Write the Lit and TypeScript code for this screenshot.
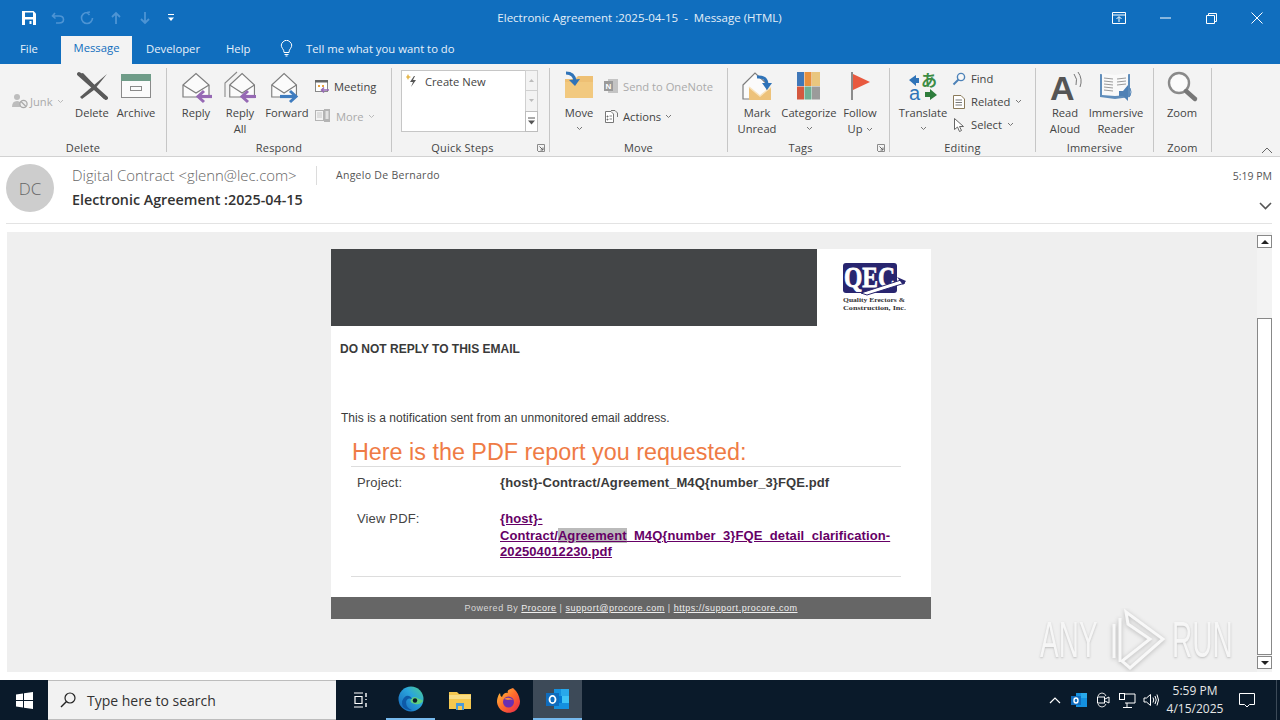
import { LitElement, html, svg, css } from "lit";
import { customElement } from "lit/decorators.js";

const chev = html`<svg class="chev" width="7" height="5" viewBox="0 0 7 5"><path d="M1 1l2.5 2.5L6 1" fill="none" stroke="currentColor" stroke-width="1"/></svg>`;

const envelope = svg`<path d="M5 15L18 3.5L31 15V27H5Z" fill="#fbfbfb" stroke="#7d7d7d" stroke-width="1.2"/><path d="M5 15L18 23L31 15" fill="none" stroke="#7d7d7d" stroke-width="1.2"/>`;
const purpleArrow = svg`<path d="M34 26.5H22" stroke="#9669b4" stroke-width="3.2" fill="none"/><path d="M26 21L20 26.5L26 32" stroke="#9669b4" stroke-width="3" fill="none"/>`;

const icons: Record<string, unknown> = {
  del: html`<svg width="32" height="35" viewBox="0 0 32 35"><path d="M3 4L7 3L31 28L28 29Z" fill="#5a5a5a"/><path d="M31 4L4 27L6 29L18 20Z" fill="#5a5a5a"/><path d="M3 4L30 28" stroke="#5a5a5a" stroke-width="4" stroke-linecap="round"/></svg>`,
  archive: html`<svg width="32" height="35" viewBox="0 0 32 35"><rect x="1.5" y="4.5" width="29" height="23" fill="#fbfbfb" stroke="#8a8a8a"/><rect x="1" y="4" width="30" height="7" fill="#6f9c88"/><rect x="10.5" y="16.5" width="11" height="4" fill="none" stroke="#8a8a8a"/></svg>`,
  reply: html`<svg width="36" height="35" viewBox="0 0 36 35">${envelope}${purpleArrow}</svg>`,
  replyall: html`<svg width="36" height="35" viewBox="0 0 36 35"><path d="M3 27V13L15 2" fill="none" stroke="#8a8a8a" stroke-width="1.1"/><g transform="translate(3,0) scale(.95,1)">${envelope}</g>${purpleArrow}</svg>`,
  forward: html`<svg width="36" height="35" viewBox="0 0 36 35"><g transform="translate(-2,0) scale(.95,1)">${envelope}</g><path d="M11 26.5H26" stroke="#3f7cbf" stroke-width="3.2" fill="none"/><path d="M21 21L27 26.5L21 32" stroke="#3f7cbf" stroke-width="3" fill="none"/></svg>`,
  move: html`<svg width="34" height="35" viewBox="0 0 34 35"><path d="M3 9H13L16 6H31V28H3Z" fill="#eec074"/><path d="M3 12H31V28H3Z" fill="#f2c97f"/><path d="M4 3Q12 3 13 11" fill="none" stroke="#2f73b8" stroke-width="3"/><path d="M7 10L13 16L18 9Z" fill="#2f73b8"/></svg>`,
  unread: html`<svg width="34" height="35" viewBox="0 0 34 35"><path d="M3 15L15 3L27 14V29H3Z" fill="#fbfbfb" stroke="#7d7d7d" stroke-width="1.2"/><path d="M9 17L20 26L31 17V30H9Z" fill="#edc27a"/><path d="M9 17L20 26L31 17" fill="none" stroke="#f8e3bd" stroke-width="1.5"/><path d="M17 7Q27 6 27 15" fill="none" stroke="#2f73b8" stroke-width="3"/><path d="M22 13L27 20L32 13Z" fill="#2f73b8"/></svg>`,
  cat: html`<svg width="30" height="35" viewBox="0 0 30 35"><rect x="3" y="2" width="7" height="14" fill="#3f77b8"/><rect x="10.5" y="2" width="7" height="14" fill="#e8903c"/><rect x="18" y="2" width="8" height="14" fill="#e9c67f"/><rect x="3" y="16.5" width="7" height="13" fill="#d4583f"/><rect x="10.5" y="16.5" width="7" height="13" fill="#6fae94"/><rect x="18" y="16.5" width="8" height="13" fill="#9b9b9b"/></svg>`,
  flag: html`<svg width="30" height="35" viewBox="0 0 30 35"><rect x="6" y="2" width="2" height="28" fill="#8b8b8b"/><path d="M8 4L25 12L8 20Z" fill="#e8593f"/></svg>`,
  translate: html`<svg class="vis" width="34" height="35" viewBox="0 0 34 35"><path d="M3 10L10 5V8H13V13H10V16Z" fill="#2f73b8"/><text x="15" y="16" class="glyph-g">あ</text><text x="3" y="30" class="glyph-b">a</text><path d="M31 25L24 30V27H19V22H24V19Z" fill="#2e7d3c"/></svg>`,
  read: html`<svg class="vis" width="40" height="35" viewBox="0 0 40 35"><text x="5" y="30" class="bigA">A</text><path d="M29 4Q33 9 31 15M33 2Q38 9 35 17" fill="none" stroke="#777" stroke-width="1"/></svg>`,
  reader: html`<svg width="38" height="35" viewBox="0 0 38 35"><path d="M3 4L18 6L33 4V27L18 29L3 27Z" fill="#5f8dbb"/><path d="M5 3L18 5V26L5 25Z" fill="#f9f9f9"/><path d="M18 5L31 3V25L18 26Z" fill="#f9f9f9"/><path d="M7 8l9 1M7 11l9 1M7 14l9 1M7 17l9 1M7 20l9 1M20 9l9-1M20 12l9-1M20 15l9-1" stroke="#9a9a9a"/><path d="M22 21H26L31 15V31L26 26H22Z" fill="#4f81b5"/><path d="M33 18Q35 22 33 26" stroke="#4f81b5" fill="none"/></svg>`,
  zoom: html`<svg width="34" height="35" viewBox="0 0 34 35"><circle cx="14" cy="13" r="10" fill="#fbfbfb" stroke="#8a8a8a" stroke-width="2.4"/><path d="M21 21L30 29" stroke="#777" stroke-width="4.4" stroke-linecap="round"/></svg>`,
};

const small: Record<string, unknown> = {
  meeting: html`<svg width="16" height="16" viewBox="0 0 16 16"><rect x="1.5" y="2.5" width="12" height="11" fill="#fff" stroke="#888"/><rect x="1" y="2" width="13" height="2.5" fill="#666"/><path d="M4 7h2v2H4zM8 7h2v2H8z" fill="#e8a23c"/><path d="M15 12H8M10 9.5L7.5 12L10 14.5" stroke="#9669b4" stroke-width="1.5" fill="none"/></svg>`,
  more: html`<svg width="18" height="16" viewBox="0 0 18 16"><rect x="1.5" y="2.5" width="8" height="10" fill="none" stroke="#b4b4b4"/><path d="M3 5h5M3 7h5M3 9h5" stroke="#c8c8c8"/><rect x="10" y="1" width="6" height="13" fill="#b4b4b4"/><rect x="11.5" y="3" width="3" height="8" fill="#e2e2e2"/></svg>`,
  junk: html`<svg width="18" height="18" viewBox="0 0 18 18"><circle cx="6" cy="5" r="3" fill="#bdbdbd"/><path d="M1 15Q1 9 6 9Q9 9 10 12V15Z" fill="#bdbdbd"/><circle cx="12.5" cy="12" r="3.6" fill="#eee" stroke="#a8a8a8" stroke-width="1.2"/><path d="M10 9.5L15 14.5" stroke="#a8a8a8" stroke-width="1.1"/></svg>`,
  onenote: html`<svg width="16" height="16" viewBox="0 0 16 16"><rect x="5" y="1" width="10" height="14" fill="#c4c4c4"/><rect x="1" y="3" width="9" height="10" fill="#9a9a9a"/><text x="2.6" y="11" class="n">N</text></svg>`,
  actions: html`<svg width="16" height="16" viewBox="0 0 16 16"><path d="M2.5 3.5H8L10.5 6V14.5H2.5Z" fill="#fff" stroke="#777"/><path d="M4 8h1v1H4zM4 11h1v1H4zM6.5 8H9M6.5 11H9" stroke="#777" stroke-width=".9"/><path d="M8 2.5H12L14.5 5V9" fill="none" stroke="#777"/></svg>`,
  find: html`<svg width="14" height="14" viewBox="0 0 14 14"><circle cx="9" cy="5" r="3.6" fill="#f8f8f8" stroke="#4d82b8" stroke-width="1.4"/><path d="M6.5 7.5L1.5 12.5" stroke="#4d82b8" stroke-width="2"/></svg>`,
  related: html`<svg width="14" height="16" viewBox="0 0 14 16"><path d="M1.5 1.5H9L12.5 5V14.5H1.5Z" fill="#fff" stroke="#8a7a5a"/><path d="M3.5 6H10M3.5 8.5H10M3.5 11H10" stroke="#777"/></svg>`,
  select: html`<svg width="14" height="16" viewBox="0 0 14 16"><path d="M2.5 1.5V12.5L5.5 10L7.5 14.5L9.5 13.5L7.5 9.5H11.5Z" fill="#fff" stroke="#666"/></svg>`,
};

function big(icon: string, lines: string[], width: number, chevron = false) {
  return html`<div class="big" style="width:${width}px">
    <div class="ic">${icons[icon]}</div>
    ${lines.map((l, i) => html`<span class="ln">${l}${chevron && i === lines.length - 1 && lines.length === 2 ? html` ${chev}` : ""}</span>`)}
    ${chevron && lines.length === 1 ? html`<span class="ln cl">${chev}</span>` : ""}
  </div>`;
}

function row(icon: string, text: string, opts: { dis?: boolean; chevron?: boolean } = {}) {
  return html`<div class="row ${opts.dis ? "dis" : ""}">${small[icon]}<span>${text}</span>${opts.chevron ? chev : ""}</div>`;
}

const launcher = html`<svg class="launch" width="8" height="8" viewBox="0 0 8 8"><path d="M.5 7V.5H7.5V7.5H1" fill="none" stroke="#8a8a8a"/><path d="M2.5 2.5L6 6M6 3.5V6H3.5" fill="none" stroke="#666"/></svg>`;

@customElement("app-root")
export class AppRoot extends LitElement {
  static styles = css`
    :host { display: block; width: 1280px; height: 720px; overflow: hidden; position: relative; background: #fff;
      font-family: "Open Sans", "Noto Sans", sans-serif; font-size: 11.2px; color: #444; }
    svg { display: block; flex: none; }
    svg.vis { overflow: visible; }
    .titlebar { height: 36px; background: #106ebe; display: flex; align-items: center; position: relative; color: #e4eef8; }
    .qat { display: flex; align-items: center; padding-left: 22px; gap: 15px; }
    .title { position: absolute; left: 0; right: 1px; text-align: center; top: 10px; font-size: 11.5px; line-height: 16px; white-space: pre; pointer-events: none; }
    .win { margin-left: auto; display: flex; }
    .win div { width: 46px; height: 30px; display: flex; align-items: center; justify-content: center; }
    .tabs { height: 28px; background: #106ebe; display: flex; align-items: flex-end; color: #e8f1fa; font-size: 11.3px; }
    .tab { height: 28px; box-sizing: border-box; padding-bottom: 4px; display: flex; align-items: center; }
    .tab.file { margin-left: 20px; width: 41px; }
    .tab.msg { width: 71px; justify-content: center; background: #f3f3f3; color: #106ebe; height: 30px; margin-top: -2px; }
    .tab.dev { margin-left: 14px; width: 80px; }
    .tab.help { width: 54px; }
    .tab.tell { display: flex; gap: 13px; }
    .ribbon { height: 92px; background: #f3f3f3; border-bottom: 1px solid #d2d2d2; display: flex; box-sizing: content-box; position: relative; }
    .group { display: flex; flex-direction: column; flex: none; height: 92px; }
    .g1 { width: 166px; } .g2 { width: 224px; } .g3 { width: 157px; } .g4 { width: 177px; }
    .g5 { width: 161px; } .g6 { width: 145px; } .g7 { width: 117px; } .g8 { width: 57px; }
    .main { flex: 1; display: flex; min-height: 0; }
    .g1 .main { padding-left: 11px; } .g2 .main { padding-left: 7px; } .g3 .main { padding-left: 9px; }
    .g4 .main { padding-left: 10px; } .g5 .main { padding-left: 7px; } .g6 .main { padding-left: 8px; }
    .g7 .main { padding-left: 6px; } .g8 .main { padding-left: 6px; }
    .glabel { height: 16px; line-height: 16px; text-align: center; position: relative; font-size: 11px; color: #444; letter-spacing: .2px; }
    .glabel.hasl { padding-right: 16px; }
    .launch { position: absolute; right: 4px; top: 4px; }
    .sep { width: 1px; margin: 4px 0; background: #c6c6c6; flex: none; }
    .big { display: flex; flex-direction: column; align-items: center; padding-top: 6px; flex: none; }
    .ic { height: 35px; display: flex; justify-content: center; }
    .ln { line-height: 16px; white-space: nowrap; display: flex; align-items: center; gap: 3px; height: 16px; }
    .cl { height: 14px; color: #666; }
    .chev { color: #777; }
    .col { display: flex; flex-direction: column; flex: none; }
    .col.two { padding-top: 11px; gap: 8px; margin-left: 2px; }
    .col.three { padding-top: 3px; margin-left: 4px; }
    .g4 .col.two { margin-left: 5px; }
    .row { height: 22px; display: flex; align-items: center; gap: 4px; white-space: nowrap; }
    .col.three .row { height: 23px; gap: 5px; }
    .dis { color: #aaa; }
    .dis .chev { color: #bbb; }
    .junk { margin-top: 28px; width: 59px; height: 18px; display: flex; align-items: center; gap: 1px; color: #aaa; flex: none; }
    .junk .chev { margin-left: 3px; color: #bbb; }
    .qs { margin-top: 6px; width: 137px; height: 62px; display: flex; }
    .qsbox { width: 124px; box-sizing: border-box; background: #fff; border: 1px solid #c6c6c6; border-right: 0; display: flex; align-items: flex-start; padding: 2px 0 0 3px; gap: 4px; }
    .qsbox span { line-height: 18px; margin-top: 0; }
    .qsbar { width: 13px; display: flex; flex-direction: column; }
    .qsbar div { flex: 1; border: 1px solid #d0d0d0; margin-bottom: -1px; background: #f3f3f3; display: flex; align-items: center; justify-content: center; }
    .qsbar div:last-child { background: #fff; border-color: #bdbdbd; margin-bottom: 0; }
    .collapse { flex: 1; display: flex; align-items: flex-end; justify-content: flex-end; padding: 0 7px 2px 0; }
    .glyph-g { font: bold 16px "Noto Sans CJK JP", sans-serif; fill: #3c8c45; }
    .glyph-b { font: 20px "Liberation Sans", sans-serif; fill: #2f73b8; }
    .bigA { font: bold 34px "Liberation Sans", sans-serif; fill: #555; }
    .n { font: bold 8px "Liberation Sans", sans-serif; fill: #fff; }

    .head { height: 67px; box-sizing: border-box; background: #fff; position: relative; display: flex; padding: 7px 8px 0 6px; }
    .avatar { width: 48px; height: 48px; border-radius: 50%; background: #cdcdcd; color: #666; font-size: 17px; font-weight: 300; display: flex; align-items: center; justify-content: center; flex: none; }
    .hmid { margin-left: 18px; flex: 1; display: flex; flex-direction: column; }
    .hline { display: flex; align-items: center; height: 22px; }
    .from { font-size: 14.9px; color: #666; font-weight: 300; width: 244px; white-space: nowrap; }
    .to { font-size: 10.5px; color: #555; border-left: 1px solid #dcdcdc; padding-left: 19px; line-height: 19px; letter-spacing: .28px; }
    .subject { font-size: 14.3px; color: #333; font-weight: 600; line-height: 20px; margin-top: 4px; white-space: nowrap; }
    .hright { display: flex; flex-direction: column; align-items: flex-end; }
    .time { font-size: 10.5px; color: #555; line-height: 24px; }
    .hchev { margin-top: 14px; }
    .rule { height: 1px; background: #e3e3e3; margin: 0 8px 0 6px; position: absolute; left: 0; right: 0; bottom: 0; }

    .bodywrap { height: 456px; background: #fff; padding: 8px 0 8px 7px; box-sizing: border-box; display: flex; }
    .viewer { width: 1250px; height: 440px; background: #efefef; flex: none; font-family: "Liberation Sans", Arial, sans-serif; color: #333; padding-top: 17px; box-sizing: border-box; }
    .card { width: 600px; height: 370px; margin-left: 324px; background: #fff; display: flex; flex-direction: column; }
    .banner { height: 77px; display: flex; flex: none; }
    .dark { width: 486px; background: #434547; }
    .logo { padding: 14px 0 0 26px; }
    .logo text { font-family: "Liberation Serif", serif; }
    .card p { margin: 0; font-size: 12px; line-height: 14px; color: #3a3a3a; }
    .dn { font-weight: bold; padding: 16px 0 0 9px; }
    .nt { padding: 55px 0 0 10px; letter-spacing: .03px; }
    .h2 { margin: 13px 30px 0 20px; font-size: 23.35px; line-height: 28px; color: #ef7b45; border-bottom: 1px solid #ddd; height: 28px; padding-left: 1px; }
    .grid { margin: 8px 0 0 26px; display: grid; grid-template-columns: 143px 400px; row-gap: 19.5px; font-size: 13px; }
    .grid .k { color: #444; line-height: 16px; letter-spacing: .15px; }
    .grid .v { font-weight: bold; line-height: 16.5px; letter-spacing: .09px; white-space: nowrap; color: #3a3a3a; }
    .grid a { color: #660066; text-decoration: underline; }
    .hl { background: #bbb; }
    .r2 { margin: 15px 30px 0 20px; border-top: 1px solid #ddd; height: 0; }
    .foot { margin-top: auto; height: 22px; background: #666; color: #d8d8d8; font-size: 9px; letter-spacing: .53px; display: flex; align-items: center; justify-content: center; white-space: pre; }
    .foot u { color: #eee; }
    .sb { width: 15px; height: 440px; background: #f3f3f3; display: flex; flex-direction: column; flex: none; }
    .sbbtn { height: 13px; background: #fff; border: 1px solid #888; box-sizing: border-box; display: flex; align-items: center; justify-content: center; flex: none; }
    .sbbtn.up { margin-top: 3px; }
    .thumb { margin-top: 70px; height: 337px; flex: none; background: #fff; border: 1px solid #888; box-sizing: border-box; }
    .sbbtn.dn2 { margin-top: 1px; }

    .wm { position: absolute; left: 1040px; top: 608px; width: 196px; height: 64px; display: flex; align-items: center; pointer-events: none; font-family: "Liberation Sans", sans-serif; font-size: 50px; color: #f6f6f6; text-shadow: 0 1px 3px #bdbdbd; }
    .wm span { display: block; width: 66px; flex: none; transform: scale(.56, 1); transform-origin: left center; font-weight: 400; white-space: nowrap; }
    .wm svg { width: 66px; height: 64px; flex: none; }

    .taskbar { height: 40px; background: #0a1a2a; display: flex; align-items: center; position: relative; color: #e6e6e6; }
    .start { width: 48px; height: 40px; display: flex; align-items: center; justify-content: center; flex: none; }
    .search { width: 288px; height: 40px; box-sizing: border-box; background: #f2f2f2; border: 1px solid #bdbdbd; border-width: 1px 0; display: flex; align-items: center; padding-left: 12px; gap: 11px; flex: none; color: #333; font-size: 14px; font-family: "Open Sans", sans-serif; }
    .tb { width: 49px; height: 40px; display: flex; align-items: center; justify-content: center; flex: none; box-sizing: border-box; }
    .tb.run { border-bottom: 2px solid #76b9ed; }
    .tb.on { background: #3d4a58; }
    .tray { margin-left: auto; display: flex; align-items: center; height: 40px; }
    .tray .ti { width: 24px; display: flex; justify-content: center; }
    .clock { width: 64px; text-align: center; font-size: 12px; line-height: 18px; color: #e6e6e6; }
    .note { width: 40px; display: flex; justify-content: center; }
    .peek { width: 4px; height: 40px; border-left: 1px solid #3c4a58; box-sizing: border-box; margin-left: 9px; }
  `;

  render() {
    return html`
      <div class="titlebar">
        <div class="qat">
          <svg width="14" height="14" viewBox="0 0 14 14"><path d="M0 0H11.5L14 2.5V14H0Z" fill="#fff"/><rect x="3" y="1.5" width="8" height="4.5" fill="#106ebe"/><rect x="3" y="8.5" width="8" height="5.5" fill="#106ebe"/><rect x="7.5" y="10" width="2" height="3" fill="#fff"/></svg>
          <svg width="14" height="14" viewBox="0 0 14 14"><path d="M4 2L1.5 5L4.5 7.5M2 5H8Q12.5 5 12.5 8.5T8 12H5" fill="none" stroke="#4d94d4" stroke-width="1.6"/></svg>
          <svg width="14" height="14" viewBox="0 0 14 14"><path d="M7 1.5A5.5 5.5 0 1 0 12.5 7M7 1.5L10 1M7 1.5L9.5 4" fill="none" stroke="#4d94d4" stroke-width="1.6"/></svg>
          <svg width="14" height="14" viewBox="0 0 14 14"><path d="M7 13V2M3 6L7 2L11 6" fill="none" stroke="#4d94d4" stroke-width="1.8"/></svg>
          <svg width="14" height="14" viewBox="0 0 14 14"><path d="M7 1V12M3 8L7 12L11 8" fill="none" stroke="#4d94d4" stroke-width="1.8"/></svg>
          <svg width="8" height="10" viewBox="0 0 8 10"><path d="M1 1.5H7" stroke="#fff"/><path d="M1 4.5H7L4 8Z" fill="#fff"/></svg>
        </div>
        <div class="title">Electronic Agreement :2025-04-15  -  Message (HTML)</div>
        <div class="win">
          <div><svg width="14" height="12" viewBox="0 0 14 12"><path d="M.5.5H13.5V11.5H.5ZM.5 3H13.5" fill="none" stroke="#fff"/><path d="M7 10V5M4.5 7L7 4.5L9.5 7" fill="none" stroke="#fff"/></svg></div>
          <div><svg width="11" height="2" viewBox="0 0 11 2"><path d="M0 1H11" stroke="#fff"/></svg></div>
          <div><svg width="11" height="11" viewBox="0 0 11 11"><path d="M.5 2.5H8.5V10.5H.5ZM2.5 2.5V.5H10.5V8.5H8.5" fill="none" stroke="#fff"/></svg></div>
          <div><svg width="12" height="12" viewBox="0 0 12 12"><path d="M.5.5L11.5 11.5M11.5.5L.5 11.5" stroke="#fff" fill="none"/></svg></div>
        </div>
      </div>
      <div class="tabs">
        <div class="tab file">File</div>
        <div class="tab msg">Message</div>
        <div class="tab dev">Developer</div>
        <div class="tab help">Help</div>
        <div class="tab tell">
          <svg width="13" height="17" viewBox="0 0 13 17"><path d="M4 12.5Q4 10 2.5 8.5A5 5 0 1 1 10.5 8.5Q9 10 9 12.5ZM4.5 14.5H8.5M5.5 16H7.5" fill="none" stroke="#fff"/></svg>
          <span>Tell me what you want to do</span>
        </div>
      </div>
      <div class="ribbon">
        <div class="group g1"><div class="main">
          <div class="junk">${small.junk}<span>Junk</span>${chev}</div>
          ${big("del", ["Delete"], 44)}${big("archive", ["Archive"], 44)}
        </div><div class="glabel">Delete</div></div>
        <div class="sep"></div>
        <div class="group g2"><div class="main">
          ${big("reply", ["Reply"], 44)}${big("replyall", ["Reply", "All"], 44)}${big("forward", ["Forward"], 50)}
          <div class="col two">${row("meeting", "Meeting")}${row("more", "More", { dis: true, chevron: true })}</div>
        </div><div class="glabel">Respond</div></div>
        <div class="sep"></div>
        <div class="group g3"><div class="main">
          <div class="qs">
            <div class="qsbox">
              <svg width="16" height="16" viewBox="0 0 16 16"><path d="M1 1L2 3L4 4L2 5L1 7L0 5L-1 4L0 3Z" fill="#e6b84f" transform="translate(2,0)"/><path d="M9 3L5 9H8L6 14L11 7H8L10 3Z" fill="#555"/></svg>
              <span>Create New</span>
            </div>
            <div class="qsbar">
              <div><svg width="5" height="3" viewBox="0 0 5 3"><path d="M0 3L2.5 0L5 3Z" fill="#bbb"/></svg></div>
              <div><svg width="5" height="3" viewBox="0 0 5 3"><path d="M0 0L2.5 3L5 0Z" fill="#bbb"/></svg></div>
              <div><svg width="7" height="8" viewBox="0 0 7 8"><path d="M0 1H7" stroke="#555"/><path d="M0 3.5H7L3.5 7.5Z" fill="#555"/></svg></div>
            </div>
          </div>
        </div><div class="glabel hasl">Quick Steps${launcher}</div></div>
        <div class="sep"></div>
        <div class="group g4"><div class="main">
          <div class="big" style="width:38px"><div class="ic">${icons.move}</div><span class="ln">Move</span><span class="ln cl">${chev}</span></div>
          <div class="col two">${row("onenote", "Send to OneNote", { dis: true })}${row("actions", "Actions", { chevron: true })}</div>
        </div><div class="glabel">Move</div></div>
        <div class="sep"></div>
        <div class="group g5"><div class="main">
          ${big("unread", ["Mark", "Unread"], 44)}
          ${big("cat", ["Categorize"], 60, true)}
          ${big("flag", ["Follow", "Up"], 42, true)}
        </div><div class="glabel hasl">Tags${launcher}</div></div>
        <div class="sep"></div>
        <div class="group g6"><div class="main">
          ${big("translate", ["Translate"], 50, true)}
          <div class="col three">${row("find", "Find")}${row("related", "Related", { chevron: true })}${row("select", "Select", { chevron: true })}</div>
        </div><div class="glabel">Editing</div></div>
        <div class="sep"></div>
        <div class="group g7"><div class="main">
          ${big("read", ["Read", "Aloud"], 46)}${big("reader", ["Immersive", "Reader"], 56)}
        </div><div class="glabel">Immersive</div></div>
        <div class="sep"></div>
        <div class="group g8"><div class="main">${big("zoom", ["Zoom"], 44)}</div><div class="glabel">Zoom</div></div>
        <div class="sep"></div>
        <div class="collapse"><svg width="12" height="7" viewBox="0 0 12 7"><path d="M1 6L6 1L11 6" fill="none" stroke="#666"/></svg></div>
      </div>
      <div class="head">
        <div class="avatar">DC</div>
        <div class="hmid">
          <div class="hline"><span class="from">Digital Contract &lt;glenn@lec.com&gt;</span><span class="to">Angelo De Bernardo</span></div>
          <div class="subject">Electronic Agreement :2025-04-15</div>
        </div>
        <div class="hright">
          <div class="time">5:19 PM</div>
          <svg class="hchev" width="13" height="8" viewBox="0 0 13 8"><path d="M1 1L6.5 6.5L12 1" fill="none" stroke="#555" stroke-width="1.6"/></svg>
        </div>
        <div class="rule"></div>
      </div>
      <div class="bodywrap">
        <div class="viewer">
          <div class="card">
            <div class="banner">
              <div class="dark"></div>
              <div class="logo">
                <svg class="vis" width="68" height="52" viewBox="0 0 68 52">
                  <rect x="0" y="0" width="54" height="30" rx="3" fill="#28256f"/>
                  <text x="1" y="24" font-size="30" font-weight="bold" fill="#fff" stroke="#fff" stroke-width=".8" textLength="51" lengthAdjust="spacingAndGlyphs">QEC</text>
                  <path d="M18 30L58 17L62 20L24 32Z" fill="#fff" stroke="#28256f" stroke-width="1"/>
                  <path d="M54 14L63 18L60 22" fill="#28256f"/>
                  <text x="0" y="39" font-size="7" font-weight="bold" fill="#333" textLength="62" lengthAdjust="spacingAndGlyphs">Quality Erectors &amp;</text>
                  <text x="0" y="47" font-size="7" font-weight="bold" fill="#333" textLength="63" lengthAdjust="spacingAndGlyphs">Construction, Inc.</text>
                </svg>
              </div>
            </div>
            <p class="dn">DO NOT REPLY TO THIS EMAIL</p>
            <p class="nt">This is a notification sent from an unmonitored email address.</p>
            <div class="h2">Here is the PDF report you requested:</div>
            <div class="grid">
              <div class="k">Project:</div>
              <div class="v">{host}-Contract/Agreement_M4Q{number_3}FQE.pdf</div>
              <div class="k">View PDF:</div>
              <div class="v"><a>{host}-<br />Contract/<span class="hl">Agreement</span>_M4Q{number_3}FQE_detail_clarification-<br />202504012230.pdf</a></div>
            </div>
            <div class="r2"></div>
            <div class="foot">Powered By <u>Procore</u> | <u>support@procore.com</u> | <u>https://support.procore.com</u></div>
          </div>
        </div>
        <div class="sb">
          <div class="sbbtn up"><svg width="8" height="4" viewBox="0 0 8 4"><path d="M0 4L4 0L8 4Z" fill="#222"/></svg></div>
          <div class="thumb"></div>
          <div class="sbbtn dn2"><svg width="8" height="4" viewBox="0 0 8 4"><path d="M0 0L4 4L8 0Z" fill="#222"/></svg></div>
        </div>
      </div>
      <div class="wm">
        <span>ANY</span>
        <svg viewBox="0 0 66 64"><g fill="none" stroke="#f8f8f8" stroke-width="3" style="filter:drop-shadow(0 1px 2px #b5b5b5)"><path d="M8 16V50M14 10V54"/><path d="M20 4L57 31L24 60L16 53L44 31L22 16Z"/></g></svg>
        <span>RUN</span>
      </div>
      <div class="taskbar">
        <div class="start"><svg width="17" height="17" viewBox="0 0 17 17"><path d="M0 2.5L7 1.5V8H0ZM8 1.3L17 0V8H8ZM0 9H7V15.5L0 14.5ZM8 9H17V17L8 15.7Z" fill="#fff"/></svg></div>
        <div class="search">
          <svg width="16" height="16" viewBox="0 0 16 16"><circle cx="10" cy="6" r="5" fill="none" stroke="#222" stroke-width="1.2"/><path d="M6.5 9.5L1 15" stroke="#222" stroke-width="1.4"/></svg>
          <span>Type here to search</span>
        </div>
        <div class="tb"><svg width="16" height="16" viewBox="0 0 16 16"><path d="M1 1H10M1 15H10M2 4.5H9V11.5H2Z" fill="none" stroke="#fff" stroke-width="1.2"/><path d="M13 1V5M13 7V8M13 11V15" stroke="#fff" stroke-width="1.4"/></svg></div>
        <div class="tb run" style="margin-left:1px"><svg width="26" height="26" viewBox="0 0 26 26"><defs><linearGradient id="e1" x1="0" y1="1" x2="1" y2="0"><stop offset="0" stop-color="#1462b8"/><stop offset=".6" stop-color="#2aa4dc"/><stop offset="1" stop-color="#4fd08a"/></linearGradient></defs><circle cx="13" cy="13" r="12.5" fill="url(#e1)"/><path d="M25 15Q22 19 17 18Q11 17 13 13Q16 9 21 13Q25 14 25 15Z" fill="#5fd080"/><path d="M14 13Q9 11 8 16Q8 22 14 24Q9 25 5 21Q2 14 8 10Q12 9 14 13Z" fill="#0e5aa8"/><circle cx="17" cy="14.5" r="2.2" fill="#0a1a2a"/></svg></div>
        <div class="tb"><svg width="24" height="22" viewBox="0 0 24 22"><path d="M1 3H9L11 5H23V20H1Z" fill="#f4c74f"/><rect x="1" y="6" width="22" height="4" fill="#f9dd85"/><path d="M8 14H16V21H8Z" fill="#4a9ad8"/><rect x="10" y="17" width="4" height="4" fill="#f4c74f"/></svg></div>
        <div class="tb"><svg width="25" height="26" viewBox="0 0 25 26"><defs><linearGradient id="f1" x1="0" y1="0" x2="1" y2="1"><stop offset="0" stop-color="#ffcb3c"/><stop offset=".5" stop-color="#ff6a2c"/><stop offset="1" stop-color="#e6244e"/></linearGradient></defs><path d="M17 1Q23 6 24 14A11.5 11.5 0 1 1 1.5 11Q2 8 4 6Q4 9 6 10Q8 5 12 6Q10 3 17 1Z" fill="url(#f1)"/><circle cx="12.5" cy="15" r="5.5" fill="#6b2fb0"/><path d="M8 12Q13 9 17 13Q15 12 12 13Z" fill="#ff8a3c"/></svg></div>
        <div class="tb on run"><svg width="26" height="24" viewBox="0 0 26 24"><rect x="9" y="2" width="15" height="20" fill="#1490df"/><rect x="16" y="2" width="8" height="7" fill="#28a8ea"/><rect x="9" y="9" width="8" height="7" fill="#0078d4"/><rect x="17" y="9" width="7" height="7" fill="#50d9ff" opacity=".7"/><rect x="1" y="6" width="13" height="13" fill="#0f6cbd"/><ellipse cx="7.5" cy="12.5" rx="3" ry="3.6" fill="none" stroke="#fff" stroke-width="1.8"/></svg></div>
        <div class="tray">
          <div class="ti"><svg width="12" height="8" viewBox="0 0 12 8"><path d="M1 7L6 2L11 7" fill="none" stroke="#fff" stroke-width="1.2"/></svg></div>
          <div class="ti"><svg width="16" height="16" viewBox="0 0 16 16"><rect x="5" y="1" width="11" height="14" fill="#1490df"/><rect x="10" y="1" width="6" height="5" fill="#28a8ea"/><rect x="0" y="4" width="10" height="9" fill="#0f6cbd"/><ellipse cx="5" cy="8.5" rx="2" ry="2.5" fill="none" stroke="#fff" stroke-width="1.4"/></svg></div>
          <div class="ti"><svg width="14" height="16" viewBox="0 0 14 16"><path d="M2 4Q3 1 6 1Q9 1 10 4M2 12Q3 15 6 15Q9 15 10 12" fill="none" stroke="#ddd"/><rect x="1.5" y="5" width="7" height="6" fill="none" stroke="#fff"/><path d="M9 7L13 5V11L9 9" fill="none" stroke="#fff"/></svg></div>
          <div class="ti"><svg width="17" height="15" viewBox="0 0 17 15"><path d="M4.5 1H16V10H6M8 10V14M4 14.5H13" fill="none" stroke="#fff"/><rect x=".5" y=".5" width="5" height="6" fill="#0a1a2a" stroke="#fff"/></svg></div>
          <div class="ti"><svg width="16" height="14" viewBox="0 0 16 14"><path d="M1 5H3.5L7.5 1.5V12.5L3.5 9H1Z" fill="none" stroke="#fff"/><path d="M10 4.5Q11.5 7 10 9.5M12 3Q14.5 7 12 11M14 1.5Q17 7 14 12.5" fill="none" stroke="#fff"/></svg></div>
          <div class="clock">5:59 PM<br />4/15/2025</div>
          <div class="note"><svg width="16" height="15" viewBox="0 0 16 15"><path d="M.5.5H15.5V11.5H10.5L8 14L5.5 11.5H.5Z" fill="none" stroke="#fff"/></svg></div>
          <div class="peek"></div>
        </div>
      </div>
    `;
  }
}
